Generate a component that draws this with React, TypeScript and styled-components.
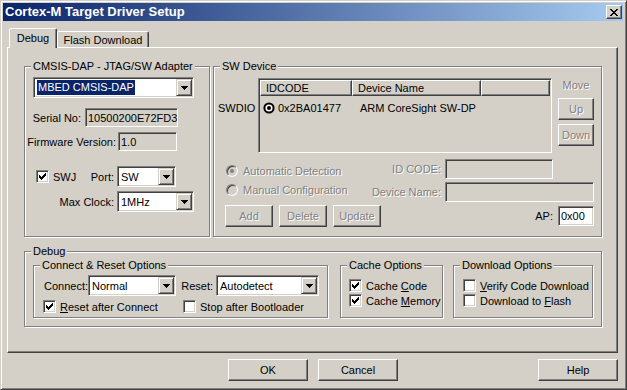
import React from 'react'
import styled, { createGlobalStyle } from 'styled-components'

const face = '#d4d0c8'

const GlobalStyle = createGlobalStyle`
  html, body { margin: 0; padding: 0; background: #fff; }
  body { font-family: "Liberation Sans", Arial, sans-serif; }
`

const Window = styled.div`
  width: 627px;
  height: 390px;
  box-sizing: border-box;
  background: ${face};
  border: 1px solid;
  border-color: ${face} #404040 #404040 ${face};
  box-shadow: inset 1px 1px #fff, inset -1px -1px #808080;
  padding: 2px 3px 2px 2px;
  display: flex;
  flex-direction: column;
  font-family: "Liberation Sans", Arial, sans-serif;
  font-size: 11px;
  line-height: 14px;
  color: #000;
`

const TitleBar = styled.div`
  flex: none;
  height: 18px;
  display: flex;
  align-items: center;
  justify-content: space-between;
  padding: 0 1px 0 2px;
  background: linear-gradient(to right, #0a246a, #a6caf0);
`

const Title = styled.span`
  color: #fff;
  font-weight: bold;
  font-size: 13px;
`

const CloseButton = styled.span`
  width: 16px;
  height: 14px;
  box-sizing: border-box;
  background: ${face};
  border: 1px solid;
  border-color: #fff #404040 #404040 #fff;
  box-shadow: inset -1px -1px #808080;
  display: flex;
  align-items: center;
  justify-content: center;
`

const Body = styled.div`
  flex: 1;
  padding: 7px 5px 0 4px;
  display: flex;
  flex-direction: column;
`

const TabStrip = styled.div`
  height: 19px;
  display: flex;
  align-items: flex-end;
  padding-left: 2px;
`

const Tab = styled.div<{ $active?: boolean; $w: number }>`
  position: relative;
  z-index: ${p => (p.$active ? 1 : 0)};
  width: ${p => p.$w}px;
  height: ${p => (p.$active ? 20 : 16)}px;
  margin-bottom: ${p => (p.$active ? -1 : 0)}px;
  box-sizing: border-box;
  background: ${face};
  border: 1px solid;
  border-bottom: none;
  border-color: #fff #404040 transparent #fff;
  box-shadow: inset -1px 0 #808080;
  border-radius: 2px 2px 0 0;
  display: flex;
  align-items: center;
  justify-content: center;
  padding-bottom: ${p => (p.$active ? 2 : 0)}px;
`

const Panel = styled.div`
  height: 306px;
  box-sizing: border-box;
  border: 1px solid;
  border-color: #fff #404040 #404040 #fff;
  box-shadow: inset -1px -1px #808080;
  padding: 11px 15px 0 16px;
`

const TopRow = styled.div`
  display: flex;
  gap: 3px;
  height: 178px;
`

const Group = styled.fieldset<{ $w?: number; $h: number; $ml?: number; $mt?: number }>`
  box-sizing: border-box;
  margin: ${p => p.$mt ?? 0}px 0 0 ${p => p.$ml ?? 0}px;
  padding: 0;
  min-width: 0;
  ${p => (p.$w ? `width: ${p.$w}px; flex: none;` : 'flex: 1;')}
  height: ${p => p.$h}px;
  border: 1px solid #808080;
  box-shadow: inset 1px 1px #fff, 1px 1px #fff;
`

const Legend = styled.legend`
  margin-left: 6px;
  padding: 0 2px;
  line-height: 14px;
  background: ${face};
`

const AdapterBody = styled.div`
  padding: 4px 0 0 8px;
`

const DeviceBody = styled.div`
  padding: 0 7px 0 4px;
`

const Row = styled.div<{ $mt?: number; $pl?: number; $h?: number }>`
  display: flex;
  align-items: center;
  margin-top: ${p => p.$mt ?? 0}px;
  padding-left: ${p => p.$pl ?? 0}px;
  ${p => (p.$h ? `height: ${p.$h}px;` : '')}
`

const Caption = styled.span<{ $w?: number; $pr?: number; $off?: boolean }>`
  flex: none;
  display: flex;
  justify-content: flex-end;
  box-sizing: border-box;
  white-space: nowrap;
  ${p => (p.$w ? `width: ${p.$w}px;` : '')}
  padding-right: ${p => p.$pr ?? 4}px;
  color: ${p => (p.$off ? '#808080' : '#000')};
  text-shadow: ${p => (p.$off ? '1px 1px #fff' : 'none')};
`

const Spacer = styled.span<{ $w?: number }>`
  ${p => (p.$w ? `flex: none; width: ${p.$w}px;` : 'flex: 1;')}
`

const Combo = styled.div<{ $w: number }>`
  flex: none;
  width: ${p => p.$w}px;
  height: 21px;
  box-sizing: border-box;
  padding: 1px;
  background: #fff;
  border: 1px solid;
  border-color: #808080 #fff #fff #808080;
  box-shadow: inset 1px 1px #404040, inset -1px -1px ${face};
  display: flex;
  align-items: center;
`

const ComboText = styled.span`
  flex: 1;
  padding-left: 2px;
  white-space: nowrap;
  overflow: hidden;
`

const Selected = styled.span`
  display: inline-block;
  padding: 0 1px;
  line-height: 15px;
  background: #0a246a;
  color: #fff;
`

const DropButton = styled.span`
  flex: none;
  width: 16px;
  height: 17px;
  box-sizing: border-box;
  background: ${face};
  border: 1px solid;
  border-color: ${face} #404040 #404040 ${face};
  box-shadow: inset 1px 1px #fff, inset -1px -1px #808080;
  display: flex;
  align-items: center;
  justify-content: center;
`

const Field = styled.div<{ $w: number; $h?: number; $white?: boolean }>`
  flex: none;
  width: ${p => p.$w}px;
  height: ${p => p.$h ?? 19}px;
  box-sizing: border-box;
  padding-left: 2px;
  background: ${p => (p.$white ? '#fff' : face)};
  border: 1px solid;
  border-color: #808080 #fff #fff #808080;
  box-shadow: inset 1px 1px #404040, inset -1px -1px ${face};
  display: flex;
  align-items: center;
  white-space: nowrap;
  overflow: hidden;
`

const CheckItem = styled.label<{ $w?: number; $ml?: number }>`
  flex: none;
  display: flex;
  align-items: center;
  gap: 4px;
  height: 15px;
  margin-left: ${p => p.$ml ?? 0}px;
  ${p => (p.$w ? `width: ${p.$w}px;` : '')}
  white-space: nowrap;
`

const CheckBox = styled.span`
  flex: none;
  width: 13px;
  height: 13px;
  box-sizing: border-box;
  background: #fff;
  border: 1px solid;
  border-color: #808080 #fff #fff #808080;
  box-shadow: inset 1px 1px #404040, inset -1px -1px ${face};
  display: flex;
  align-items: center;
  justify-content: center;
`

const RadioItem = styled.label<{ $ml?: number; $mt?: number }>`
  flex: 1;
  align-self: flex-start;
  display: flex;
  align-items: center;
  gap: 5px;
  margin: ${p => p.$mt ?? 0}px 0 0 ${p => p.$ml ?? 0}px;
  color: #808080;
  text-shadow: 1px 1px #fff;
  white-space: nowrap;
`

const RadioCircle = styled.span`
  flex: none;
  width: 12px;
  height: 12px;
  box-sizing: border-box;
  border-radius: 50%;
  border: 1px solid;
  border-color: #808080 #fff #fff #808080;
  box-shadow: inset 1px 1px #404040, inset -1px -1px ${face};
  background: ${face};
  display: flex;
  align-items: center;
  justify-content: center;
`

const RadioDot = styled.span`
  width: 4px;
  height: 4px;
  border-radius: 50%;
  background: #808080;
`

const Button = styled.button<{ $w: number; $ml?: number }>`
  flex: none;
  width: ${p => p.$w}px;
  height: 22px;
  box-sizing: border-box;
  margin: 0 0 0 ${p => p.$ml ?? 0}px;
  padding: 0;
  font: inherit;
  color: #000;
  background: ${face};
  border: 1px solid;
  border-color: #fff #404040 #404040 #fff;
  box-shadow: inset -1px -1px #808080;
  &:disabled {
    color: #808080;
    text-shadow: 1px 1px #fff;
  }
`

const SwdioLabel = styled.span`
  flex: none;
  width: 40px;
  align-self: flex-start;
  margin-top: 28px;
`

const ListView = styled.div`
  flex: none;
  width: 294px;
  height: 75px;
  margin-top: 5px;
  align-self: flex-start;
  box-sizing: border-box;
  padding: 1px;
  background: ${face};
  border: 1px solid;
  border-color: #808080 #fff #fff #808080;
  box-shadow: inset 1px 1px #404040, inset -1px -1px ${face};
  overflow: hidden;
`

const ListHeader = styled.div`
  display: flex;
  height: 16px;
`

const HeaderCell = styled.div<{ $w?: number }>`
  ${p => (p.$w ? `width: ${p.$w}px; flex: none;` : 'flex: 1;')}
  box-sizing: border-box;
  height: 16px;
  padding-left: 5px;
  border: 1px solid;
  border-color: #fff #404040 #404040 #fff;
  box-shadow: inset -1px -1px #808080;
`

const ListRow = styled.div`
  display: flex;
  align-items: center;
  height: 16px;
  margin-top: 4px;
  padding-left: 3px;
  gap: 3px;
`

const RowCell = styled.span<{ $w?: number }>`
  ${p => (p.$w ? `width: ${p.$w}px; flex: none;` : '')}
  white-space: nowrap;
`

const MoveColumn = styled.div`
  flex: none;
  width: 36px;
  margin-left: 6px;
  align-self: flex-start;
  display: flex;
  flex-direction: column;
  gap: 4px;
`

const MoveLabel = styled.span`
  margin-top: 5px;
  margin-bottom: 2px;
  text-align: center;
  color: #808080;
  text-shadow: 1px 1px #fff;
`

const DebugBody = styled.div`
  display: flex;
  padding: 0 8px;
`

const ConnectBody = styled.div`
  display: grid;
  grid-template-columns: 141px 1fr;
  row-gap: 3px;
  padding: 3px 0 0 8px;
`

const Cell = styled.div`
  display: flex;
  align-items: center;
`

const CheckList = styled.div<{ $pl: number }>`
  display: flex;
  flex-direction: column;
  padding: 6px 0 0 ${p => p.$pl}px;
`

const Footer = styled.div`
  display: flex;
  gap: 10px;
  padding: 6px 0 0 221px;
  & > :last-child {
    margin-left: auto;
  }
`

const Arrow = () => (
  <svg width="7" height="4" viewBox="0 0 7 4" shapeRendering="crispEdges">
    <path fill="#000" d="M0 0h7v1H0zM1 1h5v1H1zM2 2h3v1H2zM3 3h1v1H3z" />
  </svg>
)

const CloseGlyph = () => (
  <svg width="8" height="7" viewBox="0 0 8 7" shapeRendering="crispEdges">
    <path
      fill="#000"
      d="M0 0h2v1H0zM6 0h2v1H6zM1 1h2v1H1zM5 1h2v1H5zM2 2h4v1H2zM3 3h2v1H3zM2 4h4v1H2zM1 5h2v1H1zM5 5h2v1H5zM0 6h2v1H0zM6 6h2v1H6z"
    />
  </svg>
)

const CheckMark = () => (
  <svg width="7" height="7" viewBox="0 0 7 7" shapeRendering="crispEdges">
    <path
      fill="#000"
      d="M6 0h1v1H6zM5 1h2v1H5zM0 2h1v1H0zM4 2h3v1H4zM0 3h2v1H0zM3 3h3v1H3zM0 4h5v1H0zM1 5h3v1H1zM2 6h1v1H2z"
    />
  </svg>
)

const StateIcon = () => (
  <svg width="12" height="12" viewBox="0 0 12 12">
    <circle cx="6" cy="6" r="4.6" fill="#fff" stroke="#000" strokeWidth="2" />
    <circle cx="6" cy="6" r="2" fill="#000" />
  </svg>
)

const Select = ({ w, children }: { w: number; children: React.ReactNode }) => (
  <Combo $w={w}>
    <ComboText>{children}</ComboText>
    <DropButton>
      <Arrow />
    </DropButton>
  </Combo>
)

const Check = ({ checked, children, w, ml }: { checked?: boolean; children: React.ReactNode; w?: number; ml?: number }) => (
  <CheckItem $w={w} $ml={ml}>
    <CheckBox>{checked && <CheckMark />}</CheckBox>
    <span>{children}</span>
  </CheckItem>
)

const Radio = ({ checked, children, ml, mt }: { checked?: boolean; children: React.ReactNode; ml?: number; mt?: number }) => (
  <RadioItem $ml={ml} $mt={mt}>
    <RadioCircle>{checked && <RadioDot />}</RadioCircle>
    <span>{children}</span>
  </RadioItem>
)

export default function App() {
  return (
    <>
      <GlobalStyle />
      <Window>
        <TitleBar>
          <Title>Cortex-M Target Driver Setup</Title>
          <CloseButton>
            <CloseGlyph />
          </CloseButton>
        </TitleBar>
        <Body>
          <TabStrip>
            <Tab $active $w={48}>Debug</Tab>
            <Tab $w={92}>Flash Download</Tab>
          </TabStrip>
          <Panel>
            <TopRow>
              <Group $w={186} $h={178}>
                <Legend>CMSIS-DAP - JTAG/SW Adapter</Legend>
                <AdapterBody>
                  <Select w={161}>
                    <Selected>MBED CMSIS-DAP</Selected>
                  </Select>
                  <Row $mt={10}>
                    <Caption $w={52}>Serial No:</Caption>
                    <Field $w={93}>10500200E72FD3</Field>
                  </Row>
                  <Row $mt={5}>
                    <Caption $w={85} $pr={2}>Firmware Version:</Caption>
                    <Field $w={59}>1.0</Field>
                  </Row>
                  <Row $mt={15}>
                    <Check checked w={59} ml={3}>SWJ</Check>
                    <Caption $w={22} $pr={3}>Port:</Caption>
                    <Select w={59}>SW</Select>
                  </Row>
                  <Row $mt={4}>
                    <Caption $w={84} $pr={3}>Max Clock:</Caption>
                    <Select w={77}>1MHz</Select>
                  </Row>
                </AdapterBody>
              </Group>
              <Group $h={178}>
                <Legend>SW Device</Legend>
                <DeviceBody>
                  <Row>
                    <SwdioLabel>SWDIO</SwdioLabel>
                    <ListView>
                      <ListHeader>
                        <HeaderCell $w={92}>IDCODE</HeaderCell>
                        <HeaderCell $w={129}>Device Name</HeaderCell>
                        <HeaderCell />
                      </ListHeader>
                      <ListRow>
                        <StateIcon />
                        <RowCell $w={79}>0x2BA01477</RowCell>
                        <RowCell>ARM CoreSight SW-DP</RowCell>
                      </ListRow>
                    </ListView>
                    <MoveColumn>
                      <MoveLabel>Move</MoveLabel>
                      <Button $w={36} disabled>Up</Button>
                      <Button $w={36} disabled>Down</Button>
                    </MoveColumn>
                  </Row>
                  <Row $mt={6} $h={20}>
                    <Radio checked ml={8} mt={5}>Automatic Detection</Radio>
                    <Caption $off>ID CODE:</Caption>
                    <Field $w={108} $h={20} />
                    <Spacer $w={41} />
                  </Row>
                  <Row $mt={3} $h={20}>
                    <Radio ml={8} mt={1}>Manual Configuration</Radio>
                    <Caption $off>Device Name:</Caption>
                    <Field $w={149} $h={20} />
                  </Row>
                  <Row $mt={3} $pl={7}>
                    <Button $w={48} disabled>Add</Button>
                    <Button $w={48} $ml={6} disabled>Delete</Button>
                    <Button $w={48} $ml={6} disabled>Update</Button>
                    <Spacer />
                    <Caption $pr={5}>AP:</Caption>
                    <Field $w={36} $h={20} $white>0x00</Field>
                  </Row>
                </DeviceBody>
              </Group>
            </TopRow>
            <Group $h={83} $mt={7}>
              <Legend>Debug</Legend>
              <DebugBody>
                <Group $w={295} $h={60}>
                  <Legend>Connect &amp; Reset Options</Legend>
                  <ConnectBody>
                    <Cell>
                      <Caption $w={46} $pr={0}>Connect:</Caption>
                      <Select w={88}>Normal</Select>
                    </Cell>
                    <Cell>
                      <Caption $w={33} $pr={3}>Reset:</Caption>
                      <Select w={103}>Autodetect</Select>
                    </Cell>
                    <Cell>
                      <Check checked ml={1}>
                        <u>R</u>eset after Connect
                      </Check>
                    </Cell>
                    <Cell>
                      <Check>Stop after Bootloader</Check>
                    </Cell>
                  </ConnectBody>
                </Group>
                <Group $w={103} $h={60} $ml={12}>
                  <Legend>Cache Options</Legend>
                  <CheckList $pl={8}>
                    <Check checked>
                      Cache <u>C</u>ode
                    </Check>
                    <Check checked>
                      Cache <u>M</u>emory
                    </Check>
                  </CheckList>
                </Group>
                <Group $w={140} $h={60} $ml={10}>
                  <Legend>Download Options</Legend>
                  <CheckList $pl={9}>
                    <Check>
                      <u>V</u>erify Code Download
                    </Check>
                    <Check>
                      Download to <u>F</u>lash
                    </Check>
                  </CheckList>
                </Group>
              </DebugBody>
            </Group>
          </Panel>
          <Footer>
            <Button $w={80}>OK</Button>
            <Button $w={80}>Cancel</Button>
            <Button $w={80}>Help</Button>
          </Footer>
        </Body>
      </Window>
    </>
  )
}
